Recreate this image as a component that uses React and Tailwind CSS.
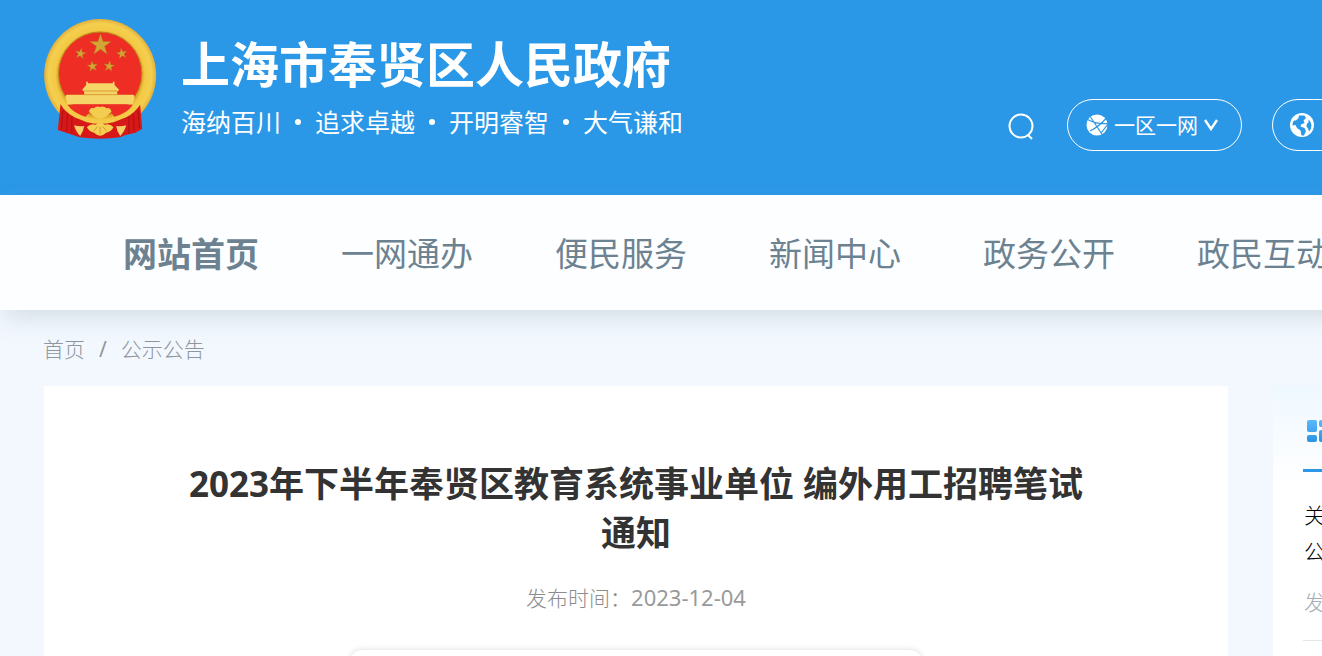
const star = (cx, cy, r, rot = 0) =>
  Array.from({ length: 10 }, (_, i) => {
    const a = ((i * 36 - 90 + rot) * Math.PI) / 180;
    const k = i % 2 ? r * 0.38 : r;
    return `${(cx + k * Math.cos(a)).toFixed(1)},${(cy + k * Math.sin(a)).toFixed(1)}`;
  }).join(" ");

function Emblem() {
  return (
    <svg viewBox="42 27 338 360" className="h-[120px] w-[113px] shrink-0" role="img" aria-label="国徽">
      <defs>
        <radialGradient id="gold" gradientUnits="userSpaceOnUse" cx="210" cy="195" r="168">
          <stop offset="75%" stopColor="#e0a92c" />
          <stop offset="80%" stopColor="#f3c945" />
          <stop offset="92%" stopColor="#f4cf4f" />
          <stop offset="100%" stopColor="#e3b03a" />
        </radialGradient>
      </defs>
      <circle cx="210" cy="195" r="168" fill="url(#gold)" />
      <circle cx="210" cy="191" r="125" fill="#ee2d25" stroke="#b98618" strokeWidth="3" />
      <g fill="#d3a534" stroke="#a8741f" strokeWidth="1">
        <polygon points={star(211, 105, 34)} />
        <polygon points={star(151, 131, 17, 10)} />
        <polygon points={star(275, 131, 17, -10)} />
        <polygon points={star(187, 169, 17, -8)} />
        <polygon points={star(237, 169, 17, 8)} />
      </g>
      <path d="M168 215h5v5h75v-5h5v10l14 14-6 6v9h46q8 0 6 10l-5 19H112l-6-19q-2-10 6-10h50v-9l-6-6 12-14z" fill="#f6d568" />
      <path d="M162 243h99M160 254h103" stroke="#d99b35" strokeWidth="3" />
      <path d="M112 284h196q-15 24-55 36l-15-18-28-8-28 8-16 18q-38-12-54-36z" fill="#ee2d25" />
      <path d="M91 282q12 23 42 40l37 15q40 10 80 0l38-15q28-16 42-38l6 72-20 12-32 8-14 6q-60 8-122 0l-22-8-43-14z" fill="#d71818" />
      <path d="M98 302l-4 58M112 312l-3 52M125 320v50M324 302l4 54M309 312l3 50M296 320v52" stroke="#b81114" strokeWidth="4" />
      <path d="M176 305q4-14 15-10 8-9 19-4 11-5 19 4 11-4 15 10l-17 16-17 7-17-7z" fill="#f3cd50" />
      <path d="M132 346q14 4 30 2-2 16-12 30-14-14-18-32zM288 346q-14 4-30 2 2 16 12 30 14-14 18-32z" fill="#f5cf6a" />
      <path d="M170 352q10-12 26-8 14-8 28 0 16-4 26 8-8 14-22 16-8 8-18 9-10-1-18-9-14-2-22-16z" fill="#f5cf52" />
      <path d="M190 364l12-14M230 364l-12-14M210 372v-22" stroke="#d99b35" strokeWidth="3" />
    </svg>
  );
}

function NetworkGlobe() {
  return (
    <svg viewBox="0 0 22 22" className="size-[22px] shrink-0" aria-hidden="true">
      <circle cx="11" cy="11" r="10.5" fill="#fff" />
      <path d="M1.500 5.500q9 5 20 4M4.500 3l12 18M20 4.500q-7 8-16 12.500M15 19l7-9" stroke="#2b98e7" strokeWidth="1.200" fill="none" />
    </svg>
  );
}

function Earth() {
  return (
    <svg viewBox="0 0 24 24" className="size-6 shrink-0" aria-hidden="true">
      <circle cx="12" cy="12" r="12" fill="#fff" />
      <path d="M9 2.500h5.500l1.500 2.500-2.500 2.500 1 2.500-3.500 1.500-.5 2 4 1.500 1.500 3-2 4.500h-2.500l-1-5-3.500-2.500-1.500-3-3 .5q0-3 1-4.500l3-1 2-2z" fill="#2b98e7" />
      <path d="M18.500 6.500q3 2.500 3 6 0 3.500-2.500 6l-1-3-1.500-2 .5-3 1.500-1z" fill="#2b98e7" />
    </svg>
  );
}

const navItems = ["一网通办", "便民服务", "新闻中心", "政务公开", "政民互动"];
const values = ["海纳百川", "追求卓越", "开明睿智", "大气谦和"];

export default function App() {
  return (
    <div className="flex h-screen flex-col overflow-hidden bg-[#f3f8ff] font-['Noto_Sans','Noto_Sans_CJK_SC',sans-serif]">
      <header className="flex h-[195px] shrink-0 items-start bg-[#2b98e7] pl-11 text-white">
        <div className="flex gap-6 pt-[19px]">
          <Emblem />
          <div className="flex w-[502px] flex-col gap-2 pt-[15px] whitespace-nowrap">
            <p className="text-[49px] leading-[60px] font-bold">上海市奉贤区人民政府</p>
            <p className="flex items-center justify-between text-[25px] leading-[40px]">
              {values.map((v, i) => (
                <span key={v} className="contents">
                  {i > 0 && <span className="size-[6px] rounded-full bg-white" />}
                  <span>{v}</span>
                </span>
              ))}
            </p>
          </div>
        </div>
        <div className="ml-auto flex w-[315px] shrink-0 items-center gap-[30px] overflow-hidden pt-[99px]">
          <button aria-label="搜索" className="shrink-0">
            <svg viewBox="0 0 30 30" className="size-[30px]" fill="none" stroke="#fff" strokeWidth="2">
              <circle cx="14" cy="16" r="11.500" />
              <path d="M21 25l4 4" />
            </svg>
          </button>
          <button className="flex h-[52px] w-[175px] shrink-0 items-center gap-[6px] rounded-full border border-white pl-[18px] text-[21px]">
            <NetworkGlobe />
            <span className="pt-[2px]">一区一网</span>
            <svg viewBox="0 0 14 12" className="h-3 w-[14px]" fill="none" stroke="#fff" strokeWidth="2.400">
              <path d="M1 1l6 9 6-9" />
            </svg>
          </button>
          <button aria-label="语言" className="flex h-[52px] w-[175px] shrink-0 items-center rounded-full border border-white pl-[17px]">
            <Earth />
          </button>
        </div>
      </header>

      <nav className="relative -mr-10 flex h-[115px] shrink-0 items-center gap-[82px] bg-[#fdfeff] pt-[3px] pl-[123px] text-[33px] whitespace-nowrap text-[#6d8291] shadow-[0_10px_24px_-4px_rgba(109,130,145,0.25)]">
        <a href="#" className="text-[34px] font-bold">网站首页</a>
        {navItems.map((n) => (
          <a key={n} href="#">{n}</a>
        ))}
      </nav>

      <div className="flex h-[76px] shrink-0 items-center gap-[14px] pt-1 pl-[43px] text-[21px] font-light text-[#8f969d]">
        <a href="#">首页</a>
        <span className="font-normal">/</span>
        <a href="#">公示公告</a>
      </div>

      <main className="flex min-h-0 flex-1 gap-[45px] pl-11">
        <article className="flex min-w-0 flex-1 flex-col items-center bg-white px-[135px] pt-[73px] text-center">
          <h1 className="text-[35px] leading-[49px] font-bold text-[#333]">
            2023年下半年奉贤区教育系统事业单位 编外用工招聘笔试通知
          </h1>
          <p className="mt-6 text-[21px] leading-8 font-light text-[#8c8c8c]">
            发布时间：<time className="text-[22px] font-normal text-[#999]">2023-12-04</time>
          </p>
          <div className="mt-9 h-16 w-[572px] shrink-0 rounded-xl bg-white shadow-[0_0_6px_rgba(0,0,0,0.15)]" />
        </article>
        <aside className="w-[49px] shrink-0 overflow-hidden bg-linear-to-b from-[#eff8ff] to-white to-[100px] pl-[30px]">
          <div className="flex h-[86px] items-start border-b-[3px] border-[#2b98e7] pt-[34px] pl-1">
            <svg viewBox="0 0 22 22" className="size-[22px] shrink-0" aria-hidden="true">
              <defs>
                <linearGradient id="tile" x1="0" y1="0" x2="0" y2="22" gradientUnits="userSpaceOnUse">
                  <stop stopColor="#5cb8fc" />
                  <stop offset="1" stopColor="#2b94e4" />
                </linearGradient>
              </defs>
              <g fill="url(#tile)">
                <rect width="10" height="12" rx="2" />
                <rect y="15" width="10" height="7" rx="2" />
                <rect x="12" width="10" height="7" rx="2" />
                <rect x="12" y="10" width="10" height="12" rx="2" />
              </g>
            </svg>
          </div>
          <div className="h-[169px] border-b border-[#e4e6ee] pt-[25px] pl-px text-[21px] leading-9 font-light">
            <a href="#" className="block w-6 text-black">关公</a>
            <p className="mt-[15px] w-6 text-[#a5adb8]">发</p>
          </div>
        </aside>
      </main>
    </div>
  );
}
